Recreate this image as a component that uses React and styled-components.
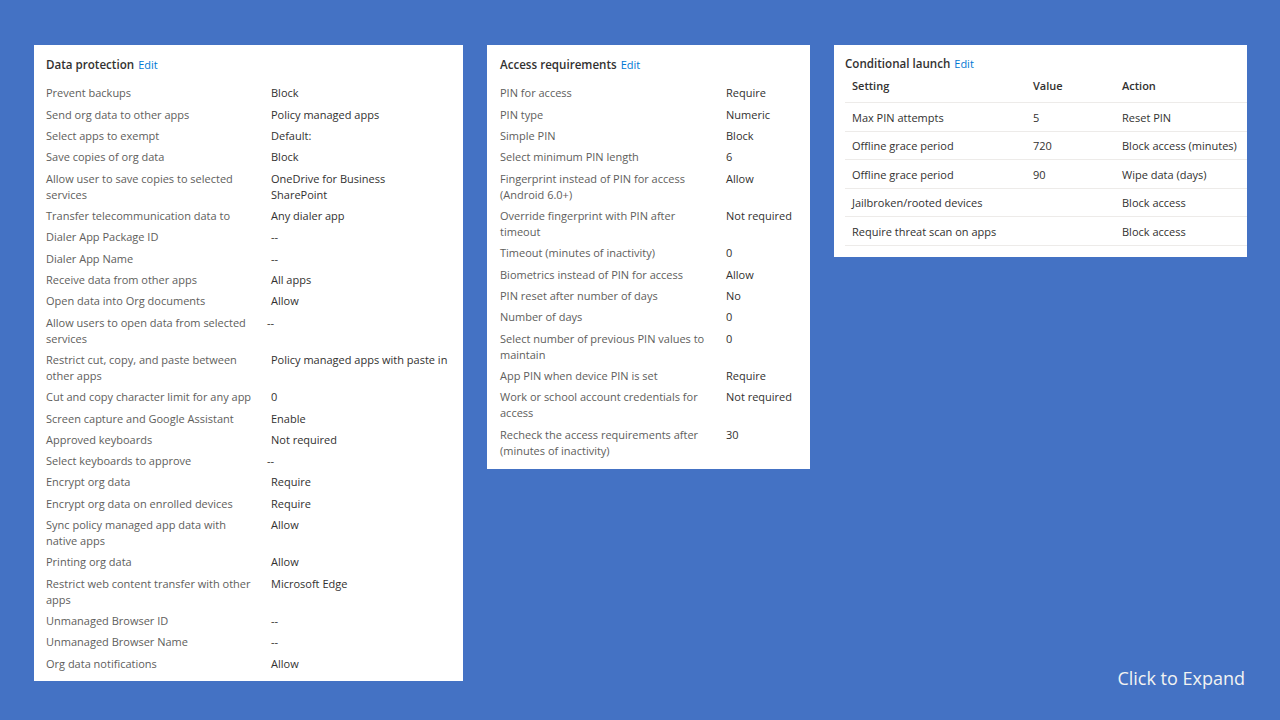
import React from "react";
import styled, { createGlobalStyle } from "styled-components";

const Global = createGlobalStyle`
  html, body { margin: 0; padding: 0; }
  body { background: #4472c4; font-family: "Open Sans", "Noto Sans", sans-serif; }
`;

const Slide = styled.div`
  position: relative;
  width: 1280px;
  height: 720px;
  overflow: hidden;
  background: #4472c4;
  box-sizing: border-box;
  padding: 45px 0 0 34px;
  display: flex;
  align-items: flex-start;
  gap: 24px;
`;

const Panel = styled.section`
  width: ${(p) => p.$w}px;
  background: #ffffff;
  box-sizing: border-box;
  padding: ${(p) => p.$pad};
  overflow: hidden;
`;

const Title = styled.h2`
  margin: 0;
  font-size: 11.6px;
  line-height: 16px;
  font-weight: 600;
  color: #323130;
  white-space: nowrap;
`;

const Edit = styled.a`
  margin-left: 4px;
  font-weight: 400;
  font-size: 11px;
  color: #0078d4;
  text-decoration: none;
`;

const List = styled.div`
  margin-top: ${(p) => p.$mt}px;
  display: grid;
  grid-template-columns: ${(p) => p.$labelW}px 1fr;
  column-gap: 11px;
`;

const Label = styled.div`
  padding: 2.67px 0;
  font-size: 11px;
  line-height: 16px;
  color: #605e5c;
  white-space: nowrap;
`;

const Value = styled.div`
  padding: 2.67px 0;
  font-size: 11px;
  line-height: 16px;
  color: #323130;
  white-space: nowrap;
  margin-left: ${(p) => p.$shift || 0}px;
`;

const Table = styled.div`
  width: 420px;
`;

const TRow = styled.div`
  display: grid;
  grid-template-columns: 181px 89px 1fr;
  align-items: center;
  border-bottom: 1px solid #edebe9;
  box-sizing: border-box;
  padding: ${(p) => (p.$head ? "6px 0 8px" : "6.5px 0 5.1px")};
`;

const Cell = styled.div`
  padding-left: 7px;
  font-size: 11px;
  line-height: 16px;
  white-space: nowrap;
  color: #323130;
  font-weight: ${(p) => (p.$head ? 600 : 400)};
`;

const Footer = styled.div`
  position: absolute;
  right: 35px;
  bottom: 30px;
  font-size: 18px;
  line-height: 24px;
  color: #f2f2f2;
`;

const dataProtection = [
  [["Prevent backups"], "Block"],
  [["Send org data to other apps"], "Policy managed apps"],
  [["Select apps to exempt"], "Default:"],
  [["Save copies of org data"], "Block"],
  [["Allow user to save copies to selected", "services"], ["OneDrive for Business", "SharePoint"]],
  [["Transfer telecommunication data to"], "Any dialer app"],
  [["Dialer App Package ID"], "--"],
  [["Dialer App Name"], "--"],
  [["Receive data from other apps"], "All apps"],
  [["Open data into Org documents"], "Allow"],
  [["Allow users to open data from selected", "services"], "--", -4],
  [["Restrict cut, copy, and paste between", "other apps"], "Policy managed apps with paste in"],
  [["Cut and copy character limit for any app"], "0"],
  [["Screen capture and Google Assistant"], "Enable"],
  [["Approved keyboards"], "Not required"],
  [["Select keyboards to approve"], "--", -4],
  [["Encrypt org data"], "Require"],
  [["Encrypt org data on enrolled devices"], "Require"],
  [["Sync policy managed app data with", "native apps"], "Allow"],
  [["Printing org data"], "Allow"],
  [["Restrict web content transfer with other", "apps"], "Microsoft Edge"],
  [["Unmanaged Browser ID"], "--"],
  [["Unmanaged Browser Name"], "--"],
  [["Org data notifications"], "Allow"],
];

const accessReq = [
  [["PIN for access"], "Require"],
  [["PIN type"], "Numeric"],
  [["Simple PIN"], "Block"],
  [["Select minimum PIN length"], "6"],
  [["Fingerprint instead of PIN for access", "(Android 6.0+)"], "Allow"],
  [["Override fingerprint with PIN after", "timeout"], "Not required"],
  [["Timeout (minutes of inactivity)"], "0"],
  [["Biometrics instead of PIN for access"], "Allow"],
  [["PIN reset after number of days"], "No"],
  [["Number of days"], "0"],
  [["Select number of previous PIN values to", "maintain"], "0"],
  [["App PIN when device PIN is set"], "Require"],
  [["Work or school account credentials for", "access"], "Not required"],
  [["Recheck the access requirements after", "(minutes of inactivity)"], "30"],
];

const launch = [
  ["Max PIN attempts", "5", "Reset PIN"],
  ["Offline grace period", "720", "Block access (minutes)"],
  ["Offline grace period", "90", "Wipe data (days)"],
  ["Jailbroken/rooted devices", "", "Block access"],
  ["Require threat scan on apps", "", "Block access"],
];

const lines = (v) =>
  (Array.isArray(v) ? v : [v]).map((t, i) => (
    <React.Fragment key={i}>
      {i > 0 && <br />}
      {t}
    </React.Fragment>
  ));

function KeyValueList({ rows, labelW }) {
  return (
    <List $mt={9.8} $labelW={labelW}>
      {rows.map(([label, value, shift], i) => (
        <React.Fragment key={i}>
          <Label>{lines(label)}</Label>
          <Value $shift={shift}>{lines(value)}</Value>
        </React.Fragment>
      ))}
    </List>
  );
}

export default function App() {
  return (
    <>
      <Global />
      <Slide>
        <Panel $w={429} $pad="12px 12px 6.5px 12px">
          <Title>
            Data protection<Edit>Edit</Edit>
          </Title>
          <KeyValueList rows={dataProtection} labelW={214} />
        </Panel>
        <Panel $w={323} $pad="12px 12px 8px 13px">
          <Title>
            Access requirements<Edit>Edit</Edit>
          </Title>
          <KeyValueList rows={accessReq} labelW={215} />
        </Panel>
        <Panel $w={413} $pad="11px 0 11px 11px">
          <Title>
            Conditional launch<Edit>Edit</Edit>
          </Title>
          <Table>
            <TRow $head>
              <Cell $head>Setting</Cell>
              <Cell $head>Value</Cell>
              <Cell $head>Action</Cell>
            </TRow>
            {launch.map((r, i) => (
              <TRow key={i}>
                <Cell>{r[0]}</Cell>
                <Cell>{r[1]}</Cell>
                <Cell>{r[2]}</Cell>
              </TRow>
            ))}
          </Table>
        </Panel>
        <Footer>Click to Expand</Footer>
      </Slide>
    </>
  );
}
